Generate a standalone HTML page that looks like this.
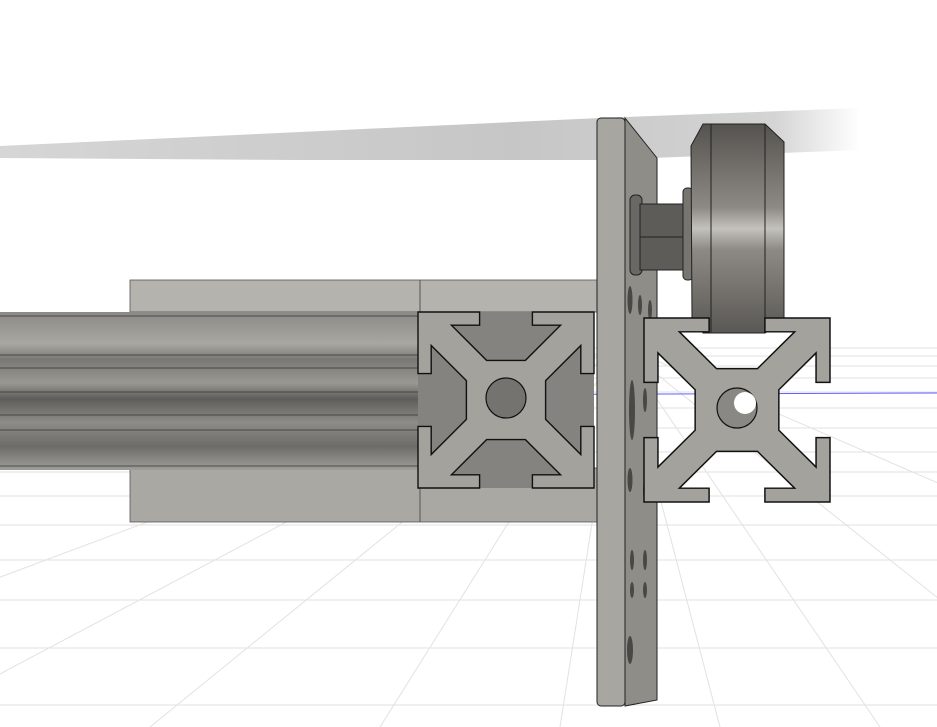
<!DOCTYPE html>
<html><head><meta charset="utf-8"><style>html,body{margin:0;padding:0;background:#fff;overflow:hidden}svg{display:block}</style></head>
<body>
<svg width="937" height="727" viewBox="0 0 937 727" xmlns="http://www.w3.org/2000/svg">
<defs>
<linearGradient id="sh" x1="0" x2="1" y1="0" y2="0"><stop offset="0" stop-color="#d6d6d6"/><stop offset="0.6" stop-color="#c6c6c6"/><stop offset="0.9" stop-color="#d4d4d4"/><stop offset="1" stop-color="#fff"/></linearGradient>
<linearGradient id="whv" x1="0" x2="0" y1="0" y2="1"><stop offset="0" stop-color="#55534f"/><stop offset="0.4" stop-color="#8d8a85"/><stop offset="0.5" stop-color="#c4c2bd"/><stop offset="0.6" stop-color="#8d8a85"/><stop offset="1" stop-color="#5a5854"/></linearGradient>
<linearGradient id="rail" x1="0" x2="0" y1="0" y2="1">
<stop offset="0" stop-color="#8c8a86"/><stop offset="0.2" stop-color="#a9a7a2"/><stop offset="0.3" stop-color="#7a7874"/><stop offset="0.45" stop-color="#9a9893"/><stop offset="0.55" stop-color="#5f5d5a"/><stop offset="0.7" stop-color="#8e8c88"/><stop offset="0.85" stop-color="#6e6c68"/><stop offset="1" stop-color="#a09e99"/></linearGradient>
<path id="prof" d="M-100,-100 L-30,-100 L-30,-85 L-62,-85 L-22,-45 L22,-45 L62,-85 L30,-85 L30,-100 L100,-100 L100,-30 L85,-30 L85,-62 L45,-22 L45,22 L85,62 L85,30 L100,30 L100,100 L30,100 L30,85 L62,85 L22,45 L-22,45 L-62,85 L-30,85 L-30,100 L-100,100 L-100,30 L-85,30 L-85,62 L-45,22 L-45,-22 L-85,-62 L-85,-30 L-100,-30 Z"/>
</defs>
<rect width="937" height="727" fill="#fff"/>
<g stroke="#e2e2e2" stroke-width="1">
<line x1="0" y1="348" x2="937" y2="348"/><line x1="0" y1="356" x2="937" y2="356"/><line x1="0" y1="366" x2="937" y2="366"/><line x1="0" y1="378" x2="937" y2="378"/><line x1="0" y1="392" x2="937" y2="392"/><line x1="0" y1="408" x2="937" y2="408"/><line x1="0" y1="428" x2="937" y2="428"/><line x1="0" y1="452" x2="937" y2="452"/><line x1="0" y1="472" x2="937" y2="472"/><line x1="0" y1="496" x2="937" y2="496"/><line x1="0" y1="525" x2="937" y2="525"/><line x1="0" y1="560" x2="937" y2="560"/><line x1="0" y1="600" x2="937" y2="600"/><line x1="0" y1="648" x2="937" y2="648"/><line x1="0" y1="705" x2="937" y2="705"/>
<line x1="620" y1="345" x2="-400" y2="727"/><line x1="620" y1="345" x2="-100" y2="727"/><line x1="620" y1="345" x2="150" y2="727"/><line x1="620" y1="345" x2="380" y2="727"/><line x1="620" y1="345" x2="560" y2="727"/><line x1="620" y1="345" x2="720" y2="727"/><line x1="620" y1="345" x2="880" y2="727"/><line x1="620" y1="345" x2="1100" y2="727"/><line x1="620" y1="345" x2="1500" y2="727"/>
</g>
<line x1="380" y1="395" x2="937" y2="393" stroke="#6060ff" stroke-width="1"/>
<polygon points="0,146 300,132 600,118 860,108 860,150 600,160 300,160 0,158" fill="url(#sh)"/>
<rect x="130" y="280" width="470" height="32" fill="#b4b3ae" stroke="#555" stroke-width="0.8"/>
<rect x="130" y="468" width="470" height="54" fill="#a9a8a3" stroke="#555" stroke-width="0.8"/>
<line x1="420" y1="280" x2="420" y2="522" stroke="#555"/>
<rect x="0" y="312" width="425" height="158" fill="url(#rail)"/>
<g stroke="#333" stroke-width="0.8"><line x1="0" y1="316" x2="425" y2="316"/><line x1="0" y1="355" x2="425" y2="355"/><line x1="0" y1="368" x2="425" y2="368"/><line x1="0" y1="392" x2="425" y2="392"/><line x1="0" y1="415" x2="425" y2="415"/><line x1="0" y1="430" x2="425" y2="430"/><line x1="0" y1="466" x2="425" y2="466"/></g>
<rect x="418" y="312" width="176" height="176" fill="#85837f"/>
<g transform="translate(506,400) scale(0.88)"><use href="#prof" fill="#a3a29d" stroke="#111" stroke-width="1.6"/></g>
<circle cx="506" cy="398" r="20" fill="#75736f" stroke="#111" stroke-width="1.2"/>
<rect x="597" y="118" width="28" height="588" rx="4" fill="#a7a6a1" stroke="#222" stroke-width="1"/>
<polygon points="625,118 657,158 657,700 625,706" fill="#8f8d88" stroke="#222" stroke-width="1"/>
<g fill="#4a4845">
<ellipse cx="630" cy="300" rx="2.5" ry="14"/><ellipse cx="640" cy="305" rx="2" ry="10"/><ellipse cx="650" cy="310" rx="2" ry="10"/>
<ellipse cx="632" cy="410" rx="3" ry="30"/><ellipse cx="645" cy="400" rx="2" ry="12"/>
<ellipse cx="630" cy="480" rx="2.5" ry="12"/><ellipse cx="645" cy="490" rx="2" ry="10"/>
<ellipse cx="632" cy="560" rx="2" ry="10"/><ellipse cx="645" cy="560" rx="2" ry="10"/><ellipse cx="632" cy="590" rx="2" ry="8"/><ellipse cx="645" cy="590" rx="2" ry="8"/>
<ellipse cx="630" cy="650" rx="3" ry="14"/>
</g>
<rect x="630" y="195" width="12" height="80" rx="5" fill="#6a6864" stroke="#222"/>
<rect x="640" y="204" width="44" height="66" fill="#5e5c58" stroke="#222"/>
<line x1="640" y1="237" x2="684" y2="237" stroke="#222"/>
<rect x="683" y="188" width="10" height="92" rx="4" fill="#77756f" stroke="#222"/>
<path d="M703,124 L765,124 L784,142 L784,322 L765,333 L703,333 L692,318 L691,146 Z" fill="url(#whv)" stroke="#222" stroke-width="1"/>
<line x1="711" y1="124" x2="711" y2="333" stroke="#222"/><line x1="765" y1="124" x2="765" y2="333" stroke="#222"/>
<g transform="translate(737,410) scale(0.93,0.92)"><use href="#prof" fill="#a3a29d" stroke="#111" stroke-width="1.6"/></g>
<circle cx="737" cy="408" r="20" fill="#8a8884" stroke="#111" stroke-width="1.2"/>
<circle cx="745" cy="403" r="11" fill="#fff"/>
</svg>
</body></html>
